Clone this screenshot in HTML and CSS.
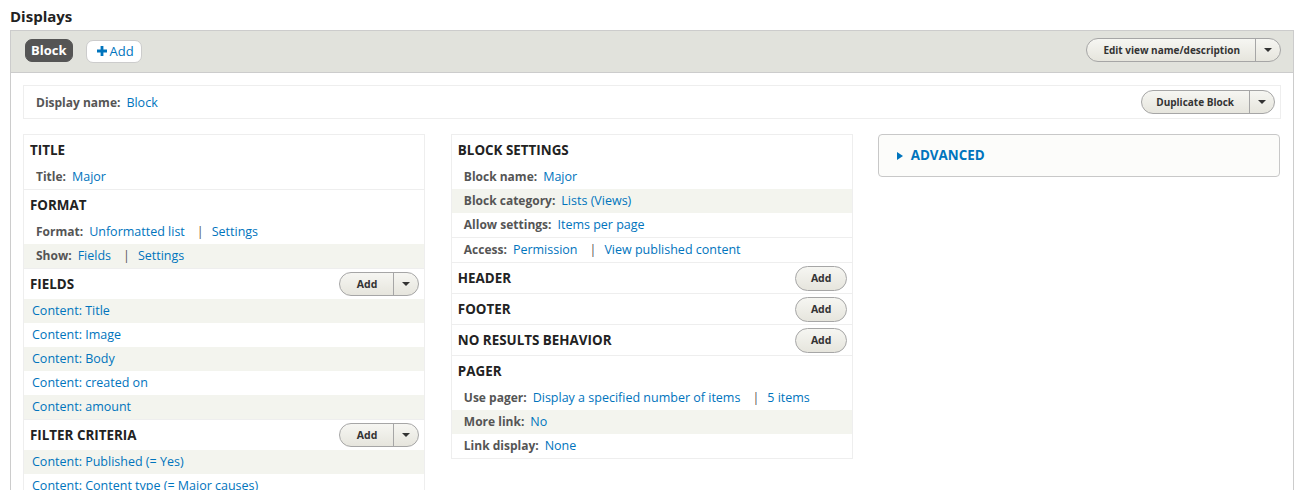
FILE: index.html
```html
<!DOCTYPE html>
<html>
<head>
<meta charset="utf-8">
<title>Displays</title>
<link rel="stylesheet" href="styles.css">
</head>
<body>
<h1 class="page-title">Displays</h1>
<div class="displays">
  <div class="displays-bar">
    <ul class="tabs">
      <li><a class="tab tab-active" href="#">Block</a></li>
      <li><a class="tab tab-add" href="#"><svg class="plus" width="10" height="10" viewBox="0 0 10 10"><path d="M3.6 0h2.8v3.6H10v2.8H6.4V10H3.6V6.4H0V3.6h3.6z" fill="#0074bd"/></svg>Add</a></li>
    </ul>
    <div class="dropbutton">
      <span class="dropbutton-action">Edit view name/description</span>
      <span class="dropbutton-toggle"><span class="arrow"></span></span>
    </div>
  </div>
  <div class="display-body">
    <div class="display-name">
      <div class="setting-text"><span class="label">Display name:</span><a href="#">Block</a></div>
      <div class="dropbutton">
        <span class="dropbutton-action dup">Duplicate Block</span>
        <span class="dropbutton-toggle"><span class="arrow"></span></span>
      </div>
    </div>
    <div class="columns">
      <div class="column">
        <div class="bucket">
          <div class="bucket-head"><h3>Title</h3></div>
          <div class="row setting"><span class="label">Title:</span><a href="#">Major</a></div>
        </div>
        <div class="bucket">
          <div class="bucket-head"><h3>Format</h3></div>
          <div class="row setting"><span class="label">Format:</span><a href="#">Unformatted list</a><span class="sep">|</span><a href="#">Settings</a></div>
          <div class="row setting alt"><span class="label">Show:</span><a href="#">Fields</a><span class="sep">|</span><a href="#">Settings</a></div>
        </div>
        <div class="bucket">
          <div class="bucket-head"><h3>Fields</h3>
            <div class="dropbutton">
              <span class="dropbutton-action add">Add</span>
              <span class="dropbutton-toggle"><span class="arrow"></span></span>
            </div>
          </div>
          <div class="row field alt"><a href="#">Content: Title</a></div>
          <div class="row field"><a href="#">Content: Image</a></div>
          <div class="row field alt"><a href="#">Content: Body</a></div>
          <div class="row field"><a href="#">Content: created on</a></div>
          <div class="row field alt"><a href="#">Content: amount</a></div>
        </div>
        <div class="bucket">
          <div class="bucket-head"><h3>Filter criteria</h3>
            <div class="dropbutton">
              <span class="dropbutton-action add">Add</span>
              <span class="dropbutton-toggle"><span class="arrow"></span></span>
            </div>
          </div>
          <div class="row field alt"><a href="#">Content: Published (= Yes)</a></div>
          <div class="row field"><a href="#">Content: Content type (= Major causes)</a></div>
        </div>
      </div>

      <div class="column">
        <div class="bucket">
          <div class="bucket-head"><h3>Block settings</h3></div>
          <div class="row setting"><span class="label">Block name:</span><a href="#">Major</a></div>
          <div class="row setting alt"><span class="label">Block category:</span><a href="#">Lists (Views)</a></div>
          <div class="row setting"><span class="label">Allow settings:</span><a href="#">Items per page</a></div>
        </div>
        <div class="bucket">
          <div class="row setting"><span class="label">Access:</span><a href="#">Permission</a><span class="sep">|</span><a href="#">View published content</a></div>
        </div>
        <div class="bucket">
          <div class="bucket-head"><h3>Header</h3><span class="button">Add</span></div>
        </div>
        <div class="bucket">
          <div class="bucket-head"><h3>Footer</h3><span class="button">Add</span></div>
        </div>
        <div class="bucket">
          <div class="bucket-head"><h3>No results behavior</h3><span class="button">Add</span></div>
        </div>
        <div class="bucket">
          <div class="bucket-head"><h3>Pager</h3></div>
          <div class="row setting"><span class="label">Use pager:</span><a href="#">Display a specified number of items</a><span class="sep">|</span><a href="#">5 items</a></div>
          <div class="row setting alt"><span class="label">More link:</span><a href="#">No</a></div>
          <div class="row setting"><span class="label">Link display:</span><a href="#">None</a></div>
        </div>
      </div>

      <div class="column">
        <div class="advanced">
          <span class="adv-arrow"></span><a href="#">Advanced</a>
        </div>
      </div>
    </div>
  </div>
</div>
</body>
</html>
```
FILE: styles.css
```css
* { box-sizing: border-box; }

body {
  margin: 0;
  padding: 0 10px;
  font-family: "Open Sans", "Noto Sans", sans-serif;
  font-size: 12.5px;
  color: #333;
  background: #fff;
}

a {
  color: #0074bd;
  text-decoration: none;
}

.page-title {
  margin: 0;
  height: 30px;
  padding-top: 5px;
  font-size: 15px;
  line-height: 22px;
  font-weight: 700;
  color: #222;
}

.displays {
  border: 1px solid #ccc;
  border-bottom: 0;
  min-height: 460px;
}

.displays-bar {
  height: 42px;
  background: #e1e2dc;
  border-bottom: 1px solid #ccc;
  display: flex;
  align-items: flex-start;
  justify-content: space-between;
  padding: 7px 12px 0 14px;
}

.tabs {
  list-style: none;
  margin: 1px 0 0;
  padding: 0;
  display: flex;
  gap: 13px;
}

.tab {
  display: flex;
  align-items: center;
  height: 23px;
  border-radius: 7px;
  border: 1px solid #ccc;
  font-size: 13px;
  padding-bottom: 1px;
}

.tab-active {
  background: #555;
  border-color: #555;
  color: #fff;
  font-weight: 700;
  padding: 0 5px 1px;
}

.tab-add {
  background: #fff;
  color: #0074bd;
  padding: 0 7px 1px 10px;
  margin-top: 1px;
}

.plus {
  margin-right: 3px;
}

.dropbutton {
  display: inline-flex;
  height: 24px;
  border: 1px solid #a6a6a6;
  border-radius: 12px;
  background: linear-gradient(#f6f6f2, #e6e5dd);
  font-size: 10px;
  font-weight: 700;
  color: #333;
}

.dropbutton-action {
  display: flex;
  align-items: center;
  padding: 0 15px 0 16px;
}

.dropbutton-action.dup {
  padding: 0 15px 0 14px;
}

.dropbutton-action.add {
  padding: 0 16px 0 17px;
  font-size: 10.5px;
}

.dropbutton-toggle {
  width: 25px;
  border-left: 1px solid #a6a6a6;
  display: flex;
  align-items: center;
  justify-content: center;
}

.arrow {
  width: 0;
  height: 0;
  border-top: 4px solid #333;
  border-left: 4px solid transparent;
  border-right: 4px solid transparent;
  margin-left: -1px;
}

.button {
  display: flex;
  align-items: center;
  justify-content: center;
  width: 52px;
  height: 25px;
  border: 1px solid #a6a6a6;
  border-radius: 13px;
  background: linear-gradient(#f6f6f2, #e6e5dd);
  font-size: 10.5px;
  font-weight: 700;
  color: #333;
}

.display-body {
  padding: 12px;
}

.display-name {
  height: 34px;
  border: 1px solid #eee;
  display: flex;
  align-items: center;
  justify-content: space-between;
  padding: 0 5px 0 12px;
}

.label {
  font-weight: 700;
  font-size: 12px;
  color: #555;
  margin-right: 6px;
}

.columns {
  margin-top: 15px;
  display: grid;
  grid-template-columns: repeat(3, 1fr);
  column-gap: 25.5px;
  align-items: start;
}

.bucket {
  border: 1px solid #eee;
}

.bucket + .bucket {
  border-top: 0;
}

.bucket-head {
  height: 30px;
  display: flex;
  align-items: center;
  justify-content: space-between;
  padding: 0 5px 0 6px;
}

.bucket-head h3 {
  margin: 0;
  font-size: 13.4px;
  font-weight: 700;
  text-transform: uppercase;
  color: #222;
}

.row {
  height: 24px;
  display: flex;
  align-items: center;
  white-space: nowrap;
  padding-bottom: 2px;
}

.row.setting {
  padding-left: 12px;
}

.row.field {
  padding-left: 8px;
}

.row.alt {
  background: #f3f4ee;
}

.sep {
  color: #555;
  padding: 0 8px 0 12px;
}

.advanced {
  height: 43px;
  border: 1px solid #c8c8c8;
  border-radius: 4px;
  background: #fcfcfa;
  display: flex;
  align-items: center;
  padding-left: 18px;
  margin-left: -1px;
  margin-right: 1px;
}

.advanced a {
  font-weight: 700;
  font-size: 13.4px;
  text-transform: uppercase;
  margin-top: -1px;
}

.adv-arrow {
  width: 0;
  height: 0;
  border-left: 6px solid #0074bd;
  border-top: 4px solid transparent;
  border-bottom: 4px solid transparent;
  margin-right: 8px;
}
```
